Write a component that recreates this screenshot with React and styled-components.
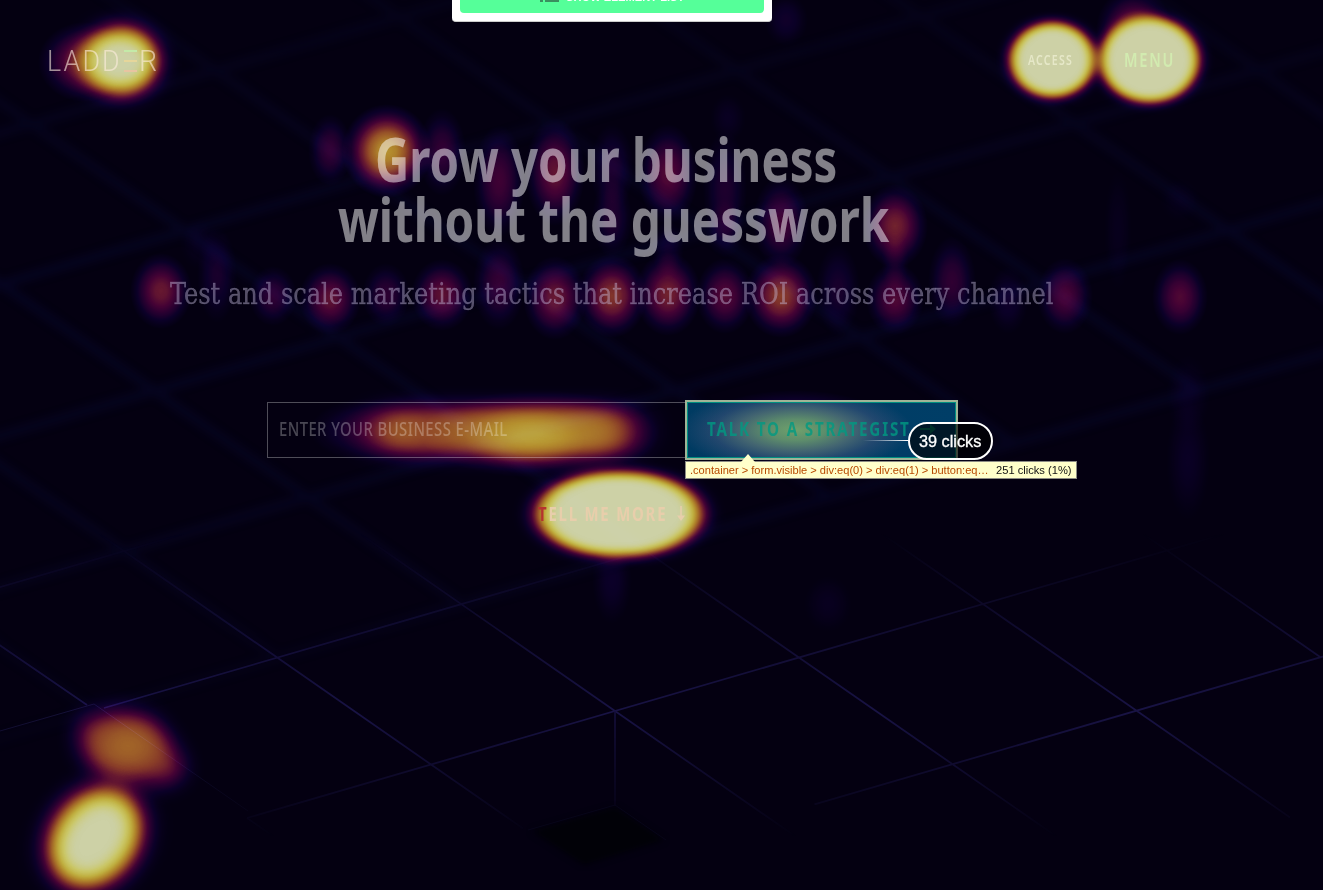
import React, { useLayoutEffect, useRef, useState } from 'react';
import styled, { createGlobalStyle } from 'styled-components';

const GlobalStyle = createGlobalStyle`
  html, body { margin: 0; padding: 0; background: #040011; }
  * { box-sizing: border-box; }
`;

const sans = `"Noto Sans", "Open Sans", sans-serif`;
const helvetica = `"Liberation Sans", Arial, sans-serif`;

const Page = styled.div`
  position: relative;
  width: 1323px;
  height: 890px;
  overflow: hidden;
  background: #040011;
  font-family: ${sans};
`;

const Backdrop = styled.svg`
  position: absolute;
  inset: 0;
  mix-blend-mode: ${(p) => p.$blend || 'normal'};
`;

const Site = styled.div`
  position: relative;
  width: 1226px;
  display: flex;
  flex-direction: column;
`;

/* Text set to an exact measure, narrowed the way a condensed face would be. */
const FitBox = styled.span`
  display: inline-block;
  width: ${(p) => p.$width}px;
  white-space: nowrap;
`;
const FitInner = styled.span`
  display: inline-block;
  transform-origin: 0 0;
`;
function Fit({ width, children }) {
  const ref = useRef(null);
  const [scale, setScale] = useState(1);
  useLayoutEffect(() => {
    setScale(width / ref.current.offsetWidth);
  }, [width]);
  return (
    <FitBox $width={width}>
      <FitInner ref={ref} style={{ transform: `scaleX(${scale})` }}>
        {children}
      </FitInner>
    </FitBox>
  );
}

const Header = styled.header`
  display: flex;
  justify-content: space-between;
  height: 129px;
  padding: 46px 51px 0 47px;
`;
const Logo = styled.div`
  display: flex;
  font: 300 30px/30px Roboto, sans-serif;
  letter-spacing: 0.08em;
  color: rgba(255, 238, 225, 0.6);
`;
const Rungs = styled.div`
  display: flex;
  flex-direction: column;
  justify-content: space-between;
  width: 13px;
  height: 22px;
  margin: 4px 2px 0 2px;
`;
const Rung = styled.i`
  height: 2px;
  background: ${(p) => p.$color};
`;
const Nav = styled.nav`
  display: flex;
  gap: 51px;
`;
const NavLink = styled.a`
  font-size: ${(p) => p.$size}px;
  font-weight: ${(p) => p.$weight};
  line-height: 28px;
  letter-spacing: 0.12em;
  color: ${(p) => p.$color};
`;

const Hero = styled.main`
  display: flex;
  flex-direction: column;
  align-items: center;
`;
const Title = styled.h1`
  display: flex;
  flex-direction: column;
  align-items: center;
  margin: 0;
  font-size: 61px;
  font-weight: 700;
  line-height: 60px;
  color: rgba(255, 255, 255, 0.5);
`;
const TitleLine = styled.span`
  display: block;
  height: 60px;
  padding-right: ${(p) => p.$trail || 0}px;
`;
const Subtitle = styled.p`
  margin: 25px 3px 0 0;
  height: 40px;
  font: 400 29px/40px "DejaVu Serif", serif;
  font-stretch: condensed;
  color: rgba(200, 190, 225, 0.42);
  -webkit-text-stroke: 0.3px rgba(200, 190, 225, 0.3);
`;
const Form = styled.form`
  display: flex;
  align-items: center;
  height: 60px;
  margin-top: 86px;
  margin-left: -1px;
`;
const Field = styled.div`
  width: 418px;
  height: 56px;
  margin-top: -1px;
  padding: 12px 0 0 11px;
  border: 1px solid rgba(255, 255, 255, 0.3);
  border-right: 0;
  font-size: 20px;
  font-weight: 500;
  line-height: 28px;
  letter-spacing: 0.03em;
  color: rgba(255, 255, 255, 0.28);
`;
const Submit = styled.div`
  display: flex;
  align-items: center;
  gap: 9px;
  width: 273px;
  height: 60px;
  padding: 0 0 2px 20px;
  border: 2px solid #9fb497;
  box-shadow: inset 0 0 0 1px #008f80;
  background:
    radial-gradient(ellipse 116px 42px at 109px 28px, rgba(112, 160, 108, 1), rgba(104, 150, 108, 0.9) 25%, rgba(92, 116, 118, 0.72) 50%, rgba(80, 86, 124, 0.42) 72%, rgba(50, 60, 115, 0) 100%),
    linear-gradient(90deg, #003b62, #003e67);
  font-size: 20px;
  font-weight: 700;
  line-height: 28px;
  letter-spacing: 0.12em;
  color: rgba(0, 154, 130, 0.8);
`;
const More = styled.a`
  display: flex;
  align-items: center;
  gap: 9px;
  margin: 40px 0 0 -3px;
  font-size: 20px;
  font-weight: 700;
  line-height: 28px;
  letter-spacing: 0.12em;
  color: #e8ceab;
`;
const HotLetter = styled.span`
  color: #b5342f;
`;

const Panel = styled.div`
  position: absolute;
  top: -30px;
  left: 452px;
  width: 320px;
  height: 52px;
  padding: 8px;
  border-radius: 4px;
  border-bottom: 1px solid #ccc;
  background: #fff;
`;
const PanelButton = styled.div`
  display: flex;
  justify-content: center;
  gap: 7px;
  height: 35px;
  padding-top: 11px;
  border-radius: 4px;
  background: #55ff99;
  font: 700 12px/16px ${helvetica};
  color: #fff;
`;

const Tooltip = styled.div`
  position: absolute;
  left: 685px;
  top: 461px;
  display: flex;
  justify-content: space-between;
  width: 392px;
  height: 18px;
  padding: 0 4px;
  border: 1px solid #8c8c84;
  background: #ffffca;
  font: 11px/16px ${helvetica};
  color: #111;
  &::before {
    content: '';
    position: absolute;
    left: 55px;
    top: -8px;
    border: 7px solid transparent;
    border-top: 0;
    border-bottom: 8px solid #ffffca;
  }
`;
const Path = styled.span`
  color: #b84a00;
`;
const Badge = styled.div`
  position: absolute;
  left: 908px;
  top: 422px;
  width: 85px;
  height: 38px;
  border: 2px solid #fff;
  border-radius: 19px;
  background: rgba(0, 0, 0, 0.62);
  display: flex;
  justify-content: center;
  padding-right: 2px;
  font: 16px/35px ${helvetica};
  color: #fff;
  -webkit-text-stroke: 0.3px #fff;
  &::before {
    content: '';
    position: absolute;
    right: 83px;
    top: 16px;
    width: 45px;
    height: 1px;
    background: linear-gradient(90deg, transparent, #fff);
  }
`;

/* The floor is a lattice: two edge directions from one shared corner. */
const A = [184, -53.5];
const B = [153.5, 106.7];
const at = (m, n) => [615 + m * A[0] + n * B[0], 711 + m * A[1] + n * B[1]];
const seg = (p, q) => `M${p[0]} ${p[1]}L${q[0]} ${q[1]}`;
const farLines = [];
for (let i = -8; i <= 10; i++) {
  farLines.push(seg(at(i, -12), at(i, -1)), seg(at(-12, i - 11), at(12, i - 11)));
}
const nearLines = [
  seg([-2, 644], [87, 705]),
  seg(at(-2, 0), at(-2, 1)),
  seg(at(-1, -7), at(-1, 0.6)),
  seg(at(0, -7), at(0, 2)),
  seg(at(1, -7), at(1, 2)),
  seg(at(2, -7), at(2, 2)),
  seg(at(3, -7), at(3, 1)),
  seg([104, 708], at(6, -1)),
  seg(at(-2, 0), at(5, 0)),
  seg(at(0.25, 1), at(4, 1)),
  seg(at(-3, -2), at(6, -2)),
];

function Grid() {
  return (
    <Backdrop width="1323" height="890" viewBox="0 0 1323 890" fill="none">
      <defs>
        <linearGradient id="farFade" x1="0" y1="0" x2="0" y2="890" gradientUnits="userSpaceOnUse">
          <stop offset="0" stopColor="#fff" stopOpacity=".25" />
          <stop offset=".3" stopColor="#fff" stopOpacity=".5" />
          <stop offset=".6" stopColor="#fff" stopOpacity=".4" />
          <stop offset=".75" stopColor="#fff" stopOpacity=".2" />
          <stop offset=".9" stopColor="#fff" stopOpacity=".1" />
        </linearGradient>
        <linearGradient id="nearFade" x1="0" y1="0" x2="0" y2="890" gradientUnits="userSpaceOnUse">
          <stop offset=".6" stopColor="#fff" stopOpacity="0" />
          <stop offset=".69" stopColor="#fff" stopOpacity=".5" />
          <stop offset=".8" stopColor="#fff" stopOpacity="1" />
          <stop offset=".87" stopColor="#fff" stopOpacity=".5" />
          <stop offset=".94" stopColor="#fff" stopOpacity="0" />
        </linearGradient>
        <mask id="far" maskUnits="userSpaceOnUse" x="0" y="0" width="1323" height="890">
          <rect width="1323" height="890" fill="url(#farFade)" />
        </mask>
        <mask id="near" maskUnits="userSpaceOnUse" x="0" y="0" width="1323" height="890">
          <rect width="1323" height="890" fill="url(#nearFade)" />
        </mask>
        <filter
          id="lineBlur"
          filterUnits="userSpaceOnUse"
          x="0"
          y="0"
          width="1323"
          height="890"
          colorInterpolationFilters="sRGB"
        >
          <feGaussianBlur stdDeviation="4" />
        </filter>
        <filter id="edgeBlur" colorInterpolationFilters="sRGB"><feGaussianBlur stdDeviation="3" /></filter>
      </defs>
      <g mask="url(#far)">
        <path d={farLines.join('')} stroke="#080932" strokeWidth="8" filter="url(#lineBlur)" />
      </g>
      <g mask="url(#near)">
        <path d={nearLines.join('')} stroke="#191345" strokeWidth="1.8" />
        <path d="M0 731L94 704L248 811" stroke="#151036" />
        <path d="M615 711V806" stroke="#16103e" strokeWidth="1.6" />
      </g>
      <path d="M615 807L664 840L584 865L532 831Z" fill="#010107" filter="url(#edgeBlur)" />
      <path d="M528 830L615 805L666 840" stroke="#070519" />
    </Backdrop>
  );
}

/* [cx, cy, rx, ry, peak] */
const softSpots = [
  [330, 150, 22, 36, 0.24], [442, 152, 24, 44, 0.24], [387, 151, 45, 47, 0.72],
  [499, 181, 26, 56, 0.28], [555, 172, 30, 54, 0.38], [612, 168, 22, 44, 0.17], [612, 218, 20, 40, 0.18],
  [668, 174, 30, 50, 0.34], [725, 190, 22, 60, 0.17], [728, 118, 18, 24, 0.07], [725, 228, 20, 30, 0.13],
  [781, 222, 28, 46, 0.29], [895, 226, 33, 42, 0.43],
  [161, 291, 31, 38, 0.4], [217, 275, 20, 48, 0.15], [273, 296, 24, 30, 0.23],
  [330, 299, 31, 36, 0.37], [386, 295, 24, 32, 0.22], [442, 295, 31, 36, 0.37],
  [499, 284, 26, 46, 0.25], [555, 298, 32, 42, 0.4], [612, 296, 35, 42, 0.48],
  [668, 294, 33, 42, 0.43], [725, 296, 29, 38, 0.34], [781, 296, 37, 42, 0.5],
  [838, 290, 22, 46, 0.15], [895, 299, 29, 36, 0.33], [952, 282, 24, 46, 0.23],
  [1008, 300, 20, 34, 0.12], [1065, 296, 28, 38, 0.31], [1180, 297, 28, 38, 0.33],
  [668, 250, 16, 30, 0.12], [895, 262, 14, 30, 0.11],
  [1118, 230, 14, 60, 0.05], [1188, 395, 22, 40, 0.06], [1188, 460, 22, 60, 0.08],
  [786, 20, 22, 26, 0.12], [612, 580, 20, 44, 0.1], [828, 604, 24, 28, 0.06],
  [1180, 200, 20, 22, 0.04], [200, 244, 20, 26, 0.05],
  [1134, 28, 38, 40, 0.38], [84, 62, 46, 40, 0.42],
  [540, 434, 120, 44, 0.36], [525, 440, 60, 34, 0.24], [370, 430, 60, 32, 0.2],
  [128, 746, 52, 38, 0.28],
  [795, 428, 100, 38, 0.4],
];

function HeatMap() {
  return (
    <Backdrop width="1323" height="890" viewBox="0 0 1323 890" $blend="screen">
      <defs>
        <radialGradient id="soft">
          <stop offset="0" stopColor="#fff" stopOpacity="1" />
          <stop offset=".2" stopColor="#fff" stopOpacity=".93" />
          <stop offset=".4" stopColor="#fff" stopOpacity=".76" />
          <stop offset=".6" stopColor="#fff" stopOpacity=".5" />
          <stop offset=".8" stopColor="#fff" stopOpacity=".2" />
          <stop offset="1" stopColor="#fff" stopOpacity="0" />
        </radialGradient>
        <filter id="edgeNav" x="-30%" y="-30%" width="160%" height="160%"><feGaussianBlur stdDeviation="6.5 5.5" /></filter>
        <filter id="edgeMore" x="-30%" y="-40%" width="160%" height="180%"><feGaussianBlur stdDeviation="10 6" /></filter>
        <filter id="edgeLogo" x="-50%" y="-50%" width="200%" height="200%"><feGaussianBlur stdDeviation="10" /></filter>
        <filter id="edgeCorner" x="-50%" y="-50%" width="200%" height="200%"><feGaussianBlur stdDeviation="12" /></filter>
        <filter id="edgeField" x="-30%" y="-80%" width="160%" height="260%"><feGaussianBlur stdDeviation="17 9" /></filter>
        <filter
          id="palette"
          filterUnits="userSpaceOnUse"
          x="0"
          y="0"
          width="1323"
          height="890"
          colorInterpolationFilters="sRGB"
        >
          <feComponentTransfer>
            <feFuncR type="table" tableValues="0 .03 .14 .26 .4 .53 .63 .7 .75 .79 .8" />
            <feFuncG type="table" tableValues="0 0 0 .01 .1 .24 .4 .55 .69 .78 .82" />
            <feFuncB type="table" tableValues="0 .1 .13 .15 .13 .1 .1 .12 .2 .36 .63" />
          </feComponentTransfer>
        </filter>
      </defs>
      <g filter="url(#palette)">
        <rect width="1323" height="890" fill="#000" />
        {softSpots.map(([cx, cy, rx, ry, peak], i) => (
          <ellipse key={i} cx={cx} cy={cy} rx={rx} ry={ry} fill="url(#soft)" opacity={peak} />
        ))}
        <rect x="372" y="406" width="266" height="50" rx="24" fill="#fff" opacity=".52" filter="url(#edgeField)" />
        <path
          d="M80 720Q118 700 154 718Q176 742 186 768Q178 790 146 784Q110 784 92 770Q70 744 80 720Z"
          fill="#fff"
          opacity=".44"
          filter="url(#edgeLogo)"
        />
        <ellipse cx="1149.5" cy="60" rx="50" ry="43" fill="#fff" filter="url(#edgeNav)" />
        <ellipse cx="1052.5" cy="60" rx="43" ry="38" fill="#fff" filter="url(#edgeNav)" />
        <rect x="536" y="471.5" width="166" height="85" rx="80" ry="42" fill="#fff" filter="url(#edgeMore)" />
        <ellipse cx="121" cy="61" rx="38" ry="34" fill="#fff" filter="url(#edgeLogo)" />
        <ellipse cx="95" cy="838" rx="54" ry="43" fill="#fff" transform="rotate(-52 95 838)" filter="url(#edgeCorner)" />
      </g>
    </Backdrop>
  );
}

export default function App() {
  return (
    <Page>
      <GlobalStyle />
      <Grid />
      <HeatMap />
      <Site>
        <Header>
          <Logo>
            <Fit width={75}>LADD</Fit>
            <Rungs>
              <Rung $color="#c4eaa8" />
              <Rung $color="#e6d69a" />
              <Rung $color="#e8c4a0" />
            </Rungs>
            <Fit width={20}>R</Fit>
          </Logo>
          <Nav>
            <NavLink $size={14} $weight={600} $color="#e6e8c8"><Fit width={45}>ACCESS</Fit></NavLink>
            <NavLink $size={20} $weight={600} $color="#d2ebb0"><Fit width={51}>MENU</Fit></NavLink>
          </Nav>
        </Header>
        <Hero>
          <Title>
            <TitleLine $trail={14}><Fit width={462}>Grow your business</Fit></TitleLine>
            <TitleLine><Fit width={551}>without the guesswork</Fit></TitleLine>
          </Title>
          <Subtitle>
            <Fit width={883}>Test and scale marketing tactics that increase ROI across every channel</Fit>
          </Subtitle>
          <Form>
            <Field><Fit width={229}>ENTER YOUR BUSINESS E-MAIL</Fit></Field>
            <Submit>
              <Fit width={204}>TALK TO A STRATEGIST</Fit>
              <svg width="16" height="12" viewBox="0 0 16 12">
                <path d="M0 6H12" stroke="#00806c" strokeWidth="2" />
                <path d="M10 1L16 6L10 11Z" fill="#00806c" />
              </svg>
            </Submit>
          </Form>
          <More>
            <Fit width={129}><HotLetter>T</HotLetter>ELL ME MORE</Fit>
            <svg width="10" height="16" viewBox="0 0 10 16">
              <path d="M5 0V12" stroke="#e8ceab" strokeWidth="1.6" />
              <path d="M1 9.5L5 15L9 9.5Z" fill="#e8ceab" />
            </svg>
          </More>
        </Hero>
      </Site>
      <Tooltip>
        <Path><Fit width={299}>.container &gt; form.visible &gt; div:eq(0) &gt; div:eq(1) &gt; button:eq…</Fit></Path>
        <Fit width={76}>251 clicks (1%)</Fit>
      </Tooltip>
      <Badge><Fit width={62}>39 clicks</Fit></Badge>
      <Panel>
        <PanelButton>
          <svg width="19" height="16" viewBox="0 0 19 16">
            <path d="M0 3H3V13H0ZM5 3H19V13H5Z" fill="#3a8f5f" />
          </svg>
          <Fit width={118}>SHOW ELEMENT LIST</Fit>
        </PanelButton>
      </Panel>
    </Page>
  );
}
